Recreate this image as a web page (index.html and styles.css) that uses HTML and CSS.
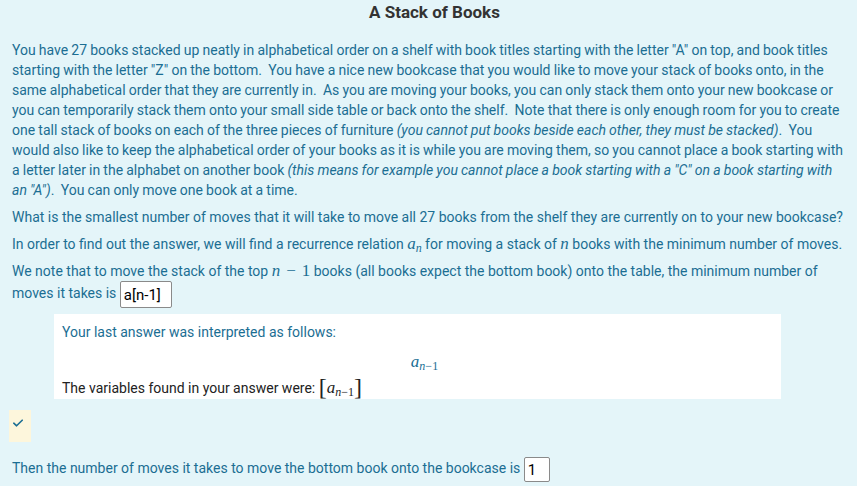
FILE: index.html
```html
<!DOCTYPE html>
<html lang="en">
<head>
<meta charset="utf-8">
<title>A Stack of Books</title>
<link rel="stylesheet" href="styles.css">
</head>
<body>
<main class="page">
  <h1 class="title">A Stack of Books</h1>
  <p class="intro">You have 27 books stacked up neatly in alphabetical order on a shelf with book titles starting with the letter "A" on top, and book titles<br>starting with the letter "Z" on the bottom.&nbsp; You have a nice new bookcase that you would like to move your stack of books onto, in the<br>same alphabetical order that they are currently in.&nbsp; As you are moving your books, you can only stack them onto your new bookcase or<br>you can temporarily stack them onto your small side table or back onto the shelf.&nbsp; Note that there is only enough room for you to create<br>one tall stack of books on each of the three pieces of furniture <em>(you cannot put books beside each other, they must be stacked)</em>.&nbsp; You<br>would also like to keep the alphabetical order of your books as it is while you are moving them, so you cannot place a book starting with<br>a letter later in the alphabet on another book <em>(this means for example you cannot place a book starting with a "C" on a book starting with<br>an "A")</em>.&nbsp; You can only move one book at a time.</p>
  <p>What is the smallest number of moves that it will take to move all 27 books from the shelf they are currently on to your new bookcase?</p>
  <p>In order to find out the answer, we will find a recurrence relation <span class="math"><i>a</i><sub><i>n</i></sub></span> for moving a stack of <span class="math"><i>n</i></span> books with the minimum number of moves.</p>
  <p class="with-input">We note that to move the stack of the top <span class="math"><i>n</i><span class="op">−</span>1</span> books (all books expect the bottom book) onto the table, the minimum number of moves it takes is <input class="answer answer-wide" type="text" value="a[n-1]" readonly></p>

  <section class="feedback">
    <p class="fb-line">Your last answer was interpreted as follows:</p>
    <div class="fb-display"><span class="math"><i>a</i><sub><i>n</i>−1</sub></span></div>
    <p class="fb-vars">The variables found in your answer were: <span class="math vars"><span class="br">[</span><i>a</i><sub><i>n</i>−1</sub><span class="br">]</span></span></p>
  </section>

  <div class="status">
    <svg class="tick" width="10" height="8" viewBox="0 0 10 8" aria-hidden="true"><path d="M0.8 4.2 L3.6 6.8 L9.2 1.2" fill="none" stroke="#1b6e93" stroke-width="1.6" stroke-linecap="round" stroke-linejoin="round"/></svg>
  </div>

  <p class="last">Then the number of moves it takes to move the bottom book onto the bookcase is <input class="answer answer-small" type="text" value="1" readonly></p>
</main>
</body>
</html>
```

FILE: styles.css
```css
html, body {
  margin: 0;
  padding: 0;
}

body {
  background: #e4f5f9;
  color: #1b6e93;
  font-family: Roboto, "Noto Sans", sans-serif;
  font-size: 14px;
  line-height: 20px;
}

.page {
  padding: 0 11px 0 12px;
  overflow-x: hidden;
}

.title {
  margin: 0;
  padding-left: 11px;
  font-size: 17px;
  line-height: 24px;
  font-weight: 700;
  color: #333333;
  text-align: center;
}

p {
  margin: 0 0 7px;
}

.intro {
  margin-top: 16px;
  margin-right: -11px;
  white-space: nowrap;
  word-spacing: -0.3px;
}

.math {
  font-family: "Liberation Serif", "DejaVu Serif", serif;
  font-size: 17px;
  white-space: nowrap;
}

.math i {
  font-style: italic;
}

.math sub {
  font-size: 12px;
  line-height: 0;
  vertical-align: -3px;
}

.op {
  margin: 0 6px;
}

.with-input {
  margin-bottom: 0;
}

.answer {
  box-sizing: border-box;
  border: 1px solid #8a8a8a;
  border-radius: 2px;
  background: #ffffff;
  color: #000000;
  font-family: Roboto, "Noto Sans", sans-serif;
  font-size: 15px;
  padding: 0 3px;
  margin: 0;
  vertical-align: middle;
  outline: none;
}

.answer-wide {
  width: 52px;
  height: 27px;
}

.answer-small {
  width: 26px;
  height: 25px;
}

.feedback {
  background: #ffffff;
  margin: 6px 65px 0 42px;
  padding: 8px 8px 0;
}

.fb-line {
  margin: 0;
}

.fb-display {
  margin: 10px 0 5px;
  padding-left: 14px;
  text-align: center;
  color: #1b6e93;
}

.fb-vars {
  margin: 0;
  line-height: 22px;
  color: #222222;
}

.vars {
  color: #222222;
}

.vars .br {
  font-size: 24px;
  line-height: 0;
  vertical-align: -2px;
}

.status {
  margin: 11px 0 0 -3px;
  width: 22px;
  height: 32px;
  box-sizing: border-box;
  padding: 9px 0 0 4px;
  background: #fdf6dc;
}

.tick {
  display: block;
}

.last {
  margin: 15px 0 0;
}
```
